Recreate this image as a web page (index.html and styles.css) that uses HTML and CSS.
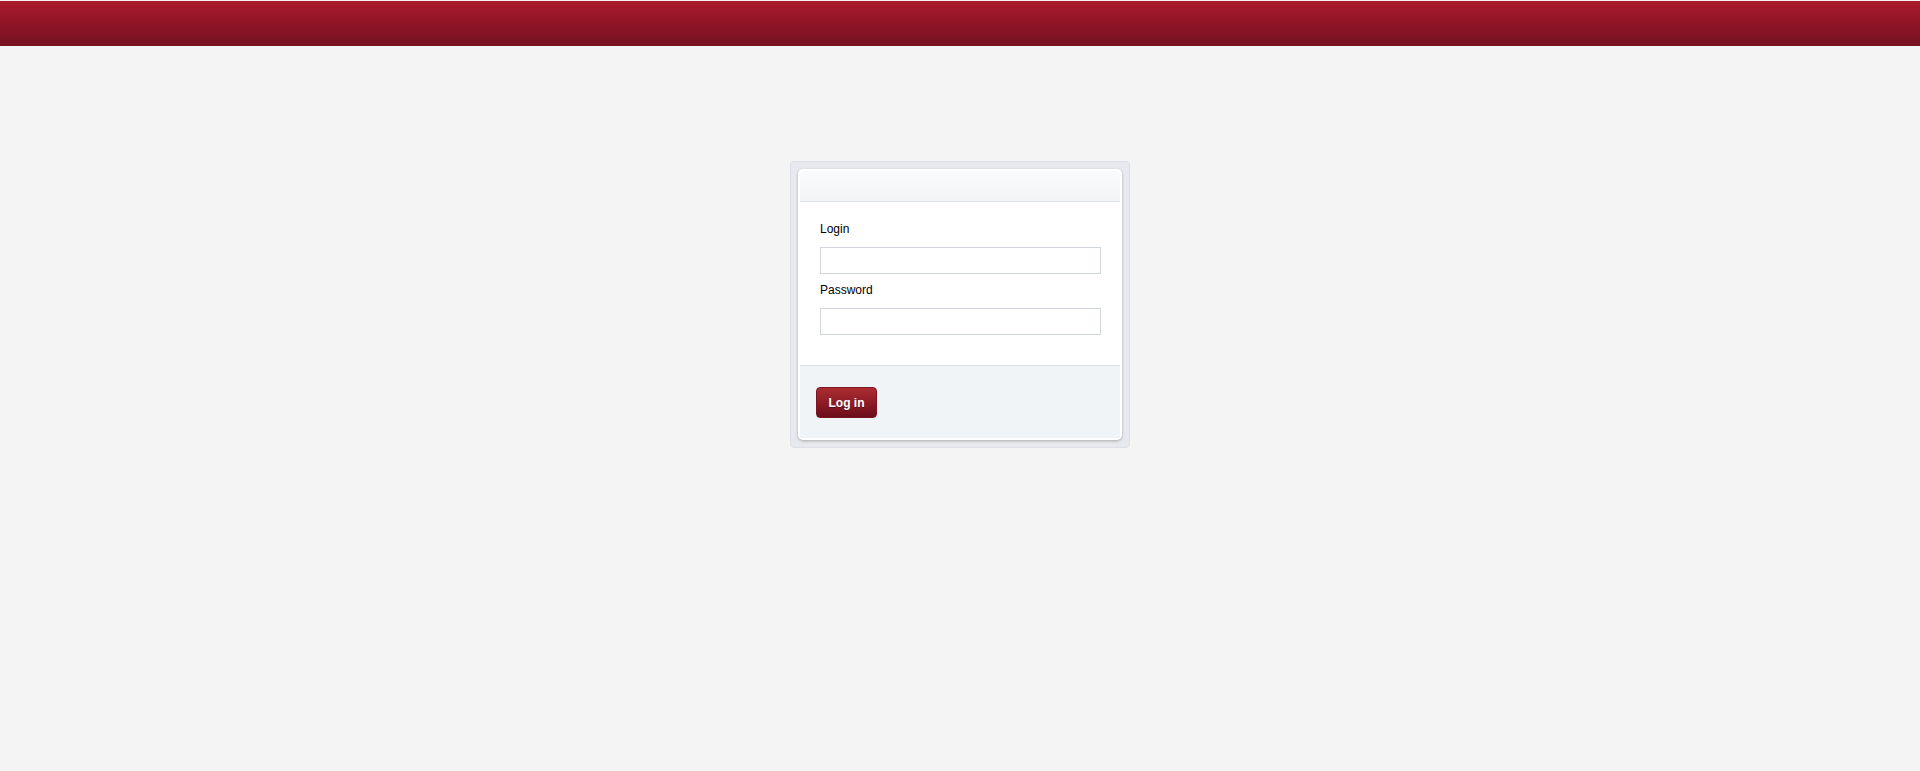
FILE: index.html
```html
<!DOCTYPE html>
<html lang="en">
<head>
<meta charset="utf-8">
<title>Log in</title>
<link rel="stylesheet" href="styles.css">
</head>
<body>
<div class="topbar"></div>
<main class="page">
  <div class="login-frame">
    <form class="login-card">
      <div class="card-head"></div>
      <div class="card-body">
        <label class="field-label" for="login">Login</label>
        <input class="field-input" id="login" type="text">
        <label class="field-label" for="password">Password</label>
        <input class="field-input" id="password" type="password">
      </div>
      <div class="card-foot">
        <button class="btn-login" type="button">Log in</button>
      </div>
    </form>
  </div>
</main>
</body>
</html>
```
FILE: styles.css
```css
* { box-sizing: border-box; }
html, body {
  margin: 0;
  padding: 0;
  background: #f4f4f4;
  font-family: "Liberation Sans", Arial, sans-serif;
  font-size: 12px;
  color: #000;
}
.topbar {
  height: 46px;
  border-top: 1px solid #f3f3f3;
  background: linear-gradient(to bottom, #aa1a2b 0%, #901526 50%, #731220 100%);
}
.page {
  display: flex;
  justify-content: center;
  padding-top: 115px;
}
.login-frame {
  width: 340px;
  padding: 7px;
  background: #e7e9ee;
  border: 1px solid #dcdfe5;
  border-radius: 4px;
}
.login-card {
  display: flex;
  flex-direction: column;
  margin: 0;
  padding: 2px;
  background: #fff;
  border-radius: 5px;
  box-shadow: 0 1px 3px rgba(0, 0, 0, 0.28);
}
.card-head {
  height: 31px;
  border-bottom: 1px solid #dde1e6;
  border-radius: 4px 4px 0 0;
  background: linear-gradient(to bottom, #fafbfc, #f2f4f6);
}
.card-body {
  display: flex;
  flex-direction: column;
  padding: 20px 19px 30px 20px;
  border-bottom: 1px solid #dcdfe6;
}
.field-label {
  display: block;
  line-height: 15px;
  margin-bottom: 10px;
}
.field-input {
  display: block;
  width: 281px;
  height: 27px;
  margin: 0 0 9px 0;
  padding: 2px 4px;
  border: 1px solid #cfd5da;
  border-radius: 0;
  background: #fff;
  font-family: inherit;
  font-size: 12px;
  outline: none;
}
.field-input:last-child { margin-bottom: 0; }
.card-foot {
  display: flex;
  align-items: flex-start;
  height: 72px;
  padding: 21px 16px 0;
  background: #f0f4f7;
}
.btn-login {
  width: 61px;
  height: 31px;
  padding: 0;
  border: 1px solid #7a1521;
  border-radius: 4px;
  background: linear-gradient(to bottom, #ab2d31 0%, #8c1a25 55%, #6b0d1b 100%);
  color: #fff;
  font-family: "Liberation Sans", Arial, sans-serif;
  font-size: 12px;
  font-weight: bold;
  text-shadow: 0 1px 0 rgba(0, 0, 0, 0.35);
  cursor: pointer;
}
```
